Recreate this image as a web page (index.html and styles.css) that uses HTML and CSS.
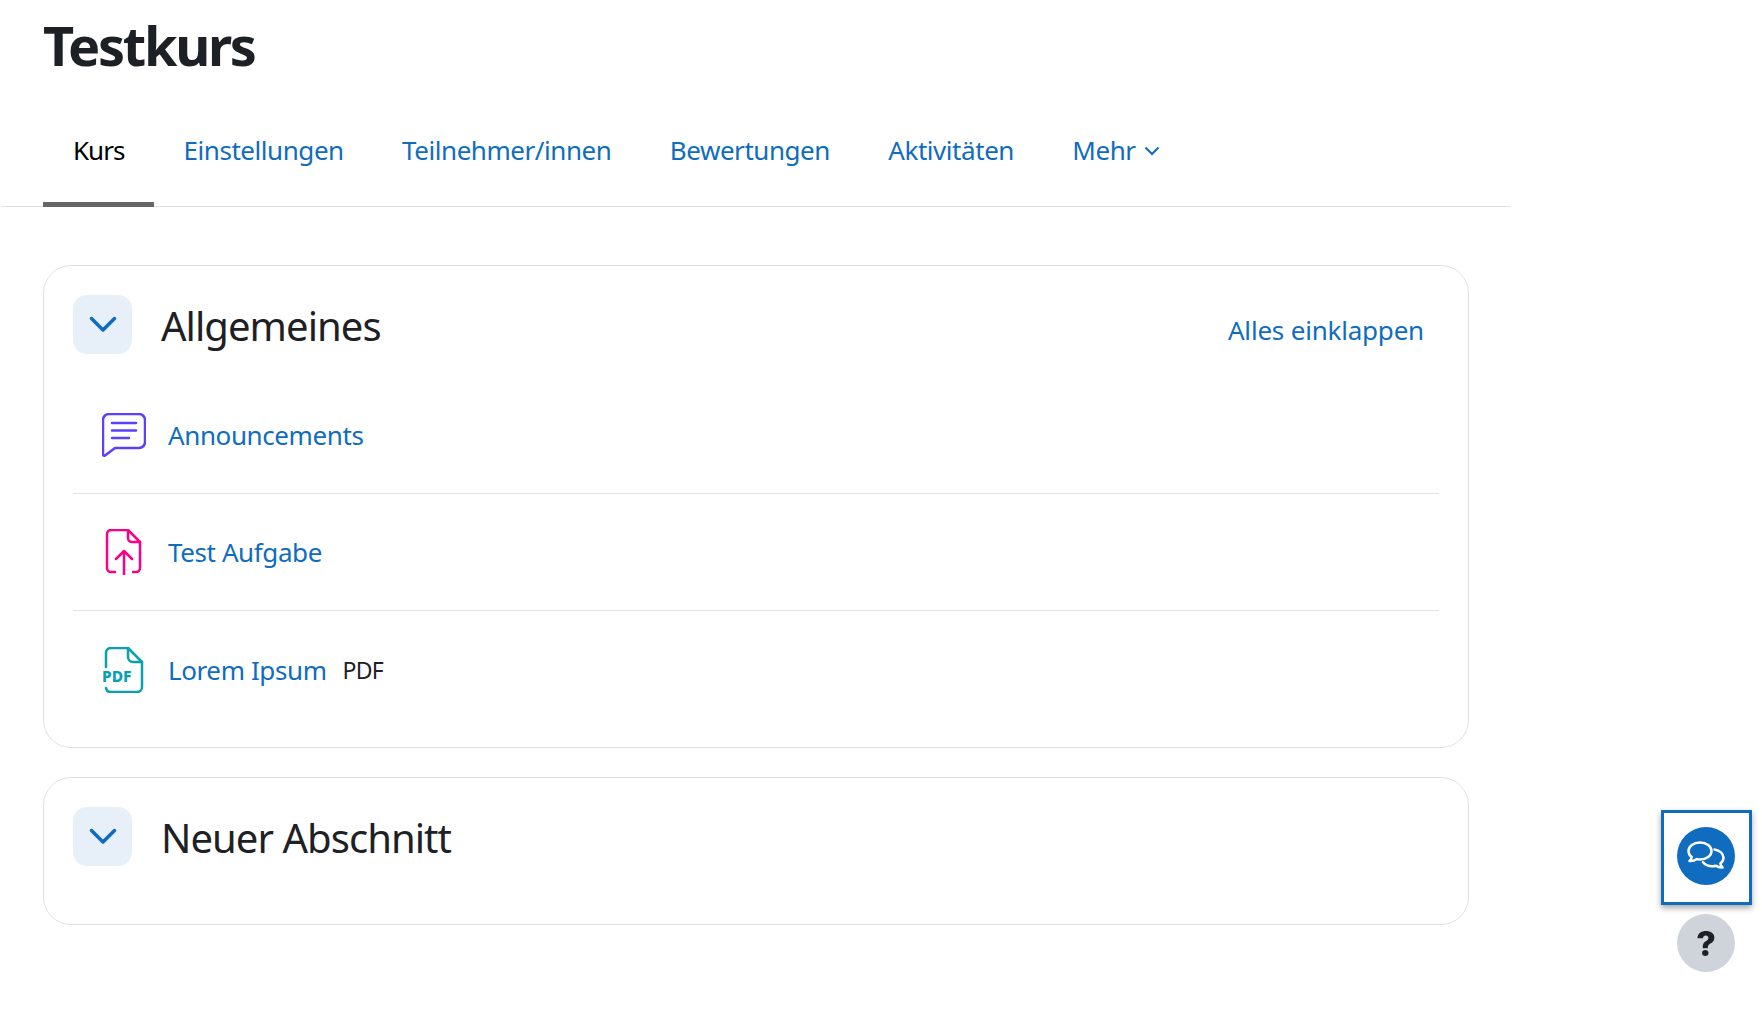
FILE: index.html
```html
<!DOCTYPE html>
<html lang="de">
<head>
<meta charset="utf-8">
<title>Testkurs</title>
<link rel="stylesheet" href="styles.css">
</head>
<body>
<main class="page">
  <h1 class="course-title">Testkurs</h1>
  <nav class="tabs">
    <a class="tab tab-active">Kurs</a>
    <a class="tab">Einstellungen</a>
    <a class="tab">Teilnehmer/innen</a>
    <a class="tab">Bewertungen</a>
    <a class="tab">Aktivitäten</a>
    <a class="tab">Mehr
      <svg class="tab-caret" viewBox="0 0 16 10"><path d="M1.500 1.500 8 8l6.500-6.500"/></svg>
    </a>
  </nav>
  <div class="content">
    <section class="card">
      <header class="card-head">
        <button class="toggle"><svg viewBox="0 0 28 18"><path d="M2.500 2.500 14 14 25.500 2.500"/></svg></button>
        <h2 class="section-title">Allgemeines</h2>
        <a class="collapse-all">Alles einklappen</a>
      </header>
      <ul class="items">
        <li class="item">
          <span class="item-icon">
            <svg class="icon-forum" width="44" height="44" viewBox="0 0 44 44"><path d="M7 1h30a6 6 0 0 1 6 6v22a6 6 0 0 1-6 6H13L3 42.500q-2 .8-2-1.500V7a6 6 0 0 1 6-6z"/><path d="M10 10h24M10 17.500h24M10 25h17"/></svg>
          </span>
          <a class="item-link">Announcements</a>
        </li>
        <li class="item">
          <span class="item-icon">
            <svg class="icon-assign" width="44" height="46" viewBox="0 0 44 46"><path d="M13 43H9a4 4 0 0 1-4-4V5a4 4 0 0 1 4-4h17l12 12v26a4 4 0 0 1-4 4h-3"/><path d="M26 1v8a4 4 0 0 0 4 4h8"/><path d="M22 46V22M14 30l8-8 8 8"/></svg>
          </span>
          <a class="item-link">Test Aufgabe</a>
        </li>
        <li class="item">
          <span class="item-icon">
            <svg class="icon-pdf" width="44" height="46" viewBox="0 0 44 46"><path d="M4 20V6a5 5 0 0 1 5-5h17l14 14v25a5 5 0 0 1-5 5H9a5 5 0 0 1-5-4"/><path d="M26 1v9a5 5 0 0 0 5 5h9"/><text class="pdf-label" x="0" y="35">PDF</text></svg>
          </span>
          <a class="item-link">Lorem Ipsum</a>
          <span class="item-type">PDF</span>
        </li>
      </ul>
    </section>
    <section class="card card-empty">
      <header class="card-head">
        <button class="toggle"><svg viewBox="0 0 28 18"><path d="M2.500 2.500 14 14 25.500 2.500"/></svg></button>
        <h2 class="section-title">Neuer Abschnitt</h2>
      </header>
    </section>
  </div>
</main>
<aside class="floating">
  <div class="chat-frame">
    <span class="chat-btn">
      <svg width="38" height="30" viewBox="0 0 38 30"><path d="M13 1.500c6.500 0 11.500 3.700 11.500 8.500S19.500 18.500 13 18.500c-1.200 0-2.400-.1-3.500-.4-1.500 1.300-4 2.100-7 1.900 1.200-1.100 2-2.500 2.200-4C2.800 14.700 1.500 12.500 1.500 10c0-4.800 5-8.500 11.500-8.500z"/><path d="M27.500 8.500c5 1 9 4.200 9 8.300 0 2.300-1.200 4.300-3.100 5.700.2 1.500 1 2.900 2.100 4-2.800.2-5-.6-6.500-1.700-1.100.3-2.300.5-3.500.5-4 0-7.500-1.500-9.500-4"/></svg>
    </span>
  </div>
  <span class="help-btn">?</span>
</aside>
</body>
</html>
```
FILE: styles.css
```css
* { box-sizing: border-box; }
html, body { margin: 0; background: #fff; }
body {
  font-family: "Noto Sans", "Open Sans", sans-serif;
  color: #1d2125;
  height: 1013px;
  overflow: hidden;
}
.page { width: 1510px; margin-left: 1px; }
.course-title {
  margin: 0;
  padding: 10px 42px 0;
  height: 113px;
  font-size: 54px;
  line-height: 70px;
  font-weight: 700;
  letter-spacing: -2.300px;
}
.tabs {
  display: flex;
  height: 94px;
  padding: 0 42px;
  box-shadow: inset 0 -1px 0 #dee2e6;
}
.tab {
  display: flex;
  align-items: center;
  gap: 8px;
  height: 94px;
  padding: 0 29.200px 16px;
  border-bottom: 5px solid transparent;
  font-size: 26px;
  letter-spacing: -0.450px;
  color: #0f6cbf;
}
.tab-active { color: #000; border-bottom-color: #666; padding-left: 30px; padding-right: 30px; letter-spacing: -1px; }
.tab-caret { width: 16px; height: 10px; margin-top: 3px; fill: none; stroke: #0f6cbf; stroke-width: 2; }
.content { padding: 58px 42px 0; display: flex; flex-direction: column; gap: 29px; }
.card {
  border: 1px solid #dee2e6;
  border-radius: 28px;
  padding: 29px;
  height: 483px;
}
.card-empty { height: 148px; }
.card-head { display: flex; align-items: flex-start; }
.toggle {
  flex: none;
  width: 59px;
  height: 59px;
  padding: 0;
  border: 0;
  border-radius: 14px;
  background: #e7eff9;
  display: flex;
  align-items: center;
  justify-content: center;
}
.toggle svg { width: 28px; height: 18px; fill: none; stroke: #0f6cbf; stroke-width: 3.500; stroke-linecap: round; stroke-linejoin: round; }
.section-title {
  margin: 1px 0 0 29px;
  font-size: 40px;
  line-height: 60px;
  font-weight: 400;
  letter-spacing: -0.950px;
}
.collapse-all {
  margin-left: auto;
  margin-right: 15px;
  margin-top: 17px;
  font-size: 26px;
  line-height: 36px;
  letter-spacing: -0.200px;
  color: #0f6cbf;
}
.items { list-style: none; margin: 21px 0 0; padding: 0; }
.item {
  display: flex;
  align-items: center;
  height: 117px;
  padding-left: 29px;
  border-bottom: 1px solid #dee2e6;
}
.item:last-child { border-bottom: 0; }
.item-icon { width: 66px; display: flex; flex: none; }
.item-icon svg { fill: none; stroke-width: 2.500; stroke-linecap: round; stroke-linejoin: round; }
.icon-forum { stroke: #5b40ff; }
.icon-assign { stroke: #f90086; }
.icon-pdf { stroke: #0aa0b0; }
.pdf-label { fill: #0aa0b0; stroke: none; font-size: 15.500px; font-weight: 800; letter-spacing: 0; }
.item-link { font-size: 26px; letter-spacing: -0.400px; color: #0f6cbf; }
.item-type { margin-left: 16px; font-size: 23px; letter-spacing: -0.800px; color: #1d2125; }
.floating {
  position: fixed;
  top: 810px;
  right: 10px;
  display: flex;
  flex-direction: column;
  align-items: center;
  gap: 9px;
}
.chat-frame {
  width: 91px;
  height: 95px;
  padding: 0 1px 3px 0;
  border: 3px solid #0f6cbf;
  background: #fff;
  box-shadow: 0 3px 6px rgba(0, 0, 0, .35);
  display: flex;
  align-items: center;
  justify-content: center;
}
.chat-btn {
  width: 58px;
  height: 58px;
  border-radius: 50%;
  background: #0f6cbf;
  display: flex;
  align-items: center;
  justify-content: center;
}
.chat-btn svg { fill: none; stroke: #fff; stroke-width: 2.500; stroke-linejoin: round; stroke-linecap: round; }
.help-btn {
  width: 58px;
  height: 58px;
  margin-right: 1px;
  border-radius: 50%;
  background: #ced4da;
  display: flex;
  align-items: center;
  justify-content: center;
  font-family: Inter, "Noto Sans", sans-serif;
  font-size: 34px;
  font-weight: 800;
  color: #1d2125;
}
```
